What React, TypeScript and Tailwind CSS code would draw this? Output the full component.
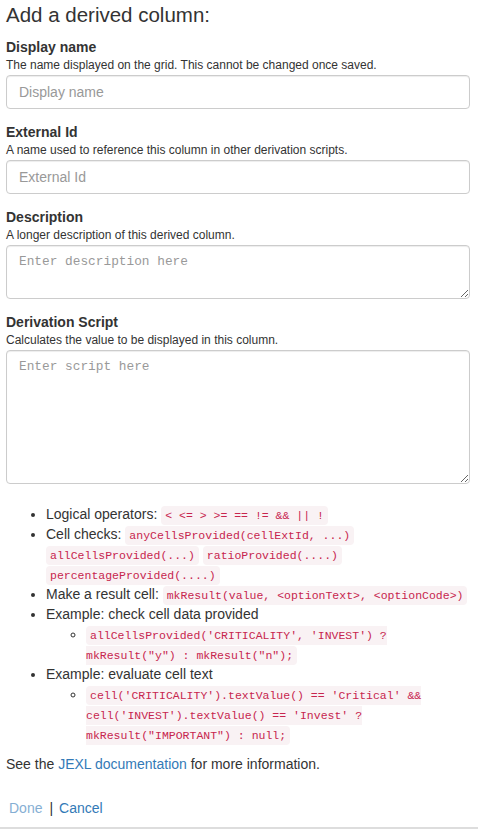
import { ReactNode } from 'react';

const sans = 'font-["Liberation_Sans",Arial,sans-serif]';
const mono = 'font-["Liberation_Mono","DejaVu_Sans_Mono",monospace]';

function Code({ children }: { children: ReactNode }) {
  return (
    <code className={`${mono} text-[11.5px] leading-none text-[#c7254e] bg-[#f9f2f4] rounded-[4px] px-[4px] py-[3px]`}>
      {children}
    </code>
  );
}

interface FieldProps {
  label: string;
  help: string;
  placeholder: string;
  rows?: number;
}

function Field({ label, help, placeholder, rows }: FieldProps) {
  const box =
    'block w-full border border-[#ccc] rounded-[4px] px-[12px] py-[6px] shadow-[inset_0_1px_1px_rgba(0,0,0,0.075)] text-[#555] outline-none placeholder:text-[#999]';
  return (
    <div className="mb-[14px]">
      <label className="block font-bold text-[14px] leading-[19px]">{label}</label>
      <div className="text-[12px] leading-[17px] mb-[1px]">{help}</div>
      {rows ? (
        <textarea
          rows={rows}
          placeholder={placeholder}
          className={`${box} ${mono} text-[12.8px] leading-[20px] resize-y`}
        />
      ) : (
        <input
          placeholder={placeholder}
          className={`${box} ${sans} h-[34px] text-[14px] leading-[20px]`}
        />
      )}
    </div>
  );
}

export default function App() {
  return (
    <div className={`${sans} text-[#333] text-[14px] leading-[20px] bg-white w-[478px]`}>
      <div className="pl-[6px] pr-[8px] pt-[4px]">
        <h4 className="text-[20.5px] leading-[22px] mb-[12px]">Add a derived column:</h4>

        <Field
          label="Display name"
          help="The name displayed on the grid. This cannot be changed once saved."
          placeholder="Display name"
        />
        <Field
          label="External Id"
          help="A name used to reference this column in other derivation scripts."
          placeholder="External Id"
        />
        <Field
          label="Description"
          help="A longer description of this derived column."
          placeholder="Enter description here"
          rows={2}
        />
        <Field
          label="Derivation Script"
          help="Calculates the value to be displayed in this column."
          placeholder="Enter script here"
          rows={6}
        />

        <ul className="list-disc pl-[40px] mt-[20px] mb-[10px]">
          <li>
            Logical operators: <Code>&lt; &lt;= &gt; &gt;= == != &amp;&amp; || !</Code>
          </li>
          <li>
            Cell checks: <Code>anyCellsProvided(cellExtId, ...)</Code> <Code>allCellsProvided(...)</Code>{' '}
            <Code>ratioProvided(....)</Code> <Code>percentageProvided(....)</Code>
          </li>
          <li>
            Make a result cell: <Code>mkResult(value, &lt;optionText&gt;, &lt;optionCode&gt;)</Code>
          </li>
          <li>
            Example: check cell data provided
            <ul className="list-[circle] pl-[40px]">
              <li>
                <Code>allCellsProvided('CRITICALITY', 'INVEST') ? mkResult("y") : mkResult("n");</Code>
              </li>
            </ul>
          </li>
          <li>
            Example: evaluate cell text
            <ul className="list-[circle] pl-[40px]">
              <li>
                <Code>
                  cell('CRITICALITY').textValue() == 'Critical' &amp;&amp; cell('INVEST').textValue() == 'Invest' ?
                  mkResult("IMPORTANT") : null;
                </Code>
              </li>
            </ul>
          </li>
        </ul>

        <p>
          See the <a className="text-[#337ab7]">JEXL documentation</a> for more information.
        </p>

        <div className="mt-[24px] pb-[9px] pl-[3px]">
          <a className="text-[#337ab7] opacity-60">Done</a>
          <span className="ml-[7px] mr-[6px]">|</span>
          <a className="text-[#337ab7]">Cancel</a>
        </div>
      </div>
      <div className="border-b-2 border-[#ddd]" />
    </div>
  );
}
